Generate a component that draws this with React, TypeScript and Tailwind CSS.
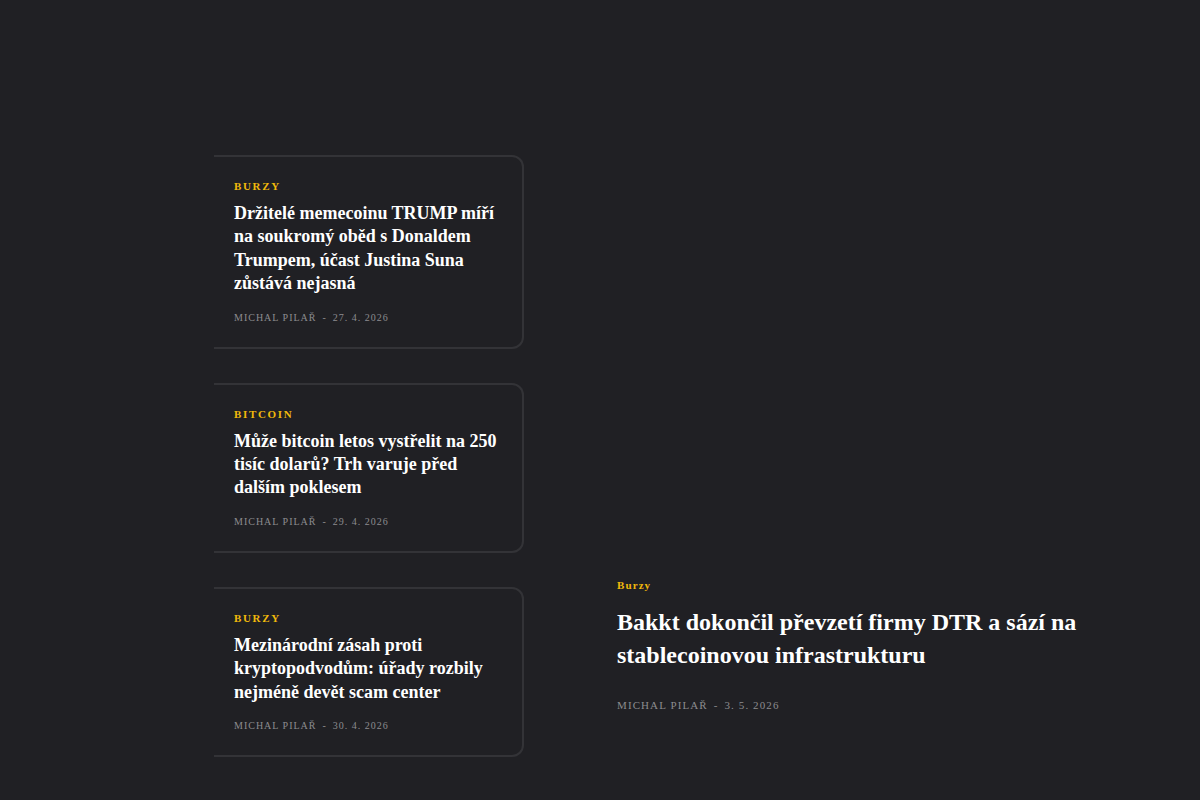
const SERIF = 'font-["Liberation_Serif","Times_New_Roman",serif]'

type Article = {
    category: string
    title: string
    author: string
    date: string
}

const SIDE_ARTICLES: Article[] = [
    {
        category: 'Burzy',
        title: 'Držitelé memecoinu TRUMP míří na soukromý oběd s Donaldem Trumpem, účast Justina Suna zůstává nejasná',
        author: 'Michal Pilař',
        date: '27. 4. 2026',
    },
    {
        category: 'Bitcoin',
        title: 'Může bitcoin letos vystřelit na 250 tisíc dolarů? Trh varuje před dalším poklesem',
        author: 'Michal Pilař',
        date: '29. 4. 2026',
    },
    {
        category: 'Burzy',
        title: 'Mezinárodní zásah proti kryptopodvodům: úřady rozbily nejméně devět scam center',
        author: 'Michal Pilař',
        date: '30. 4. 2026',
    },
]

const FEATURED: Article = {
    category: 'Burzy',
    title: 'Bakkt dokončil převzetí firmy DTR a sází na stablecoinovou infrastrukturu',
    author: 'Michal Pilař',
    date: '3. 5. 2026',
}

function SideCard({ article }: { article: Article }) {
    return (
        <article className="border-2 border-l-0 border-[#333337] rounded-r-xl pl-5 pr-6 pt-[22px] pb-[22px]">
            <p className="text-[11px] leading-[14px] font-bold uppercase tracking-[0.15em] text-[#f0b90b]">
                {article.category}
            </p>
            <h3 className="mt-[9px] text-[18px] leading-[23.4px] font-bold text-white">
                {article.title}
            </h3>
            <p className="mt-[15px] text-[10px] leading-[14px] uppercase tracking-[0.1em] text-[#8c8c8f]">
                {article.author}
                <span className="mx-1.5">-</span>
                {article.date}
            </p>
        </article>
    )
}

export default function App() {
    return (
        <div className={`min-h-[800px] bg-[#202024] ${SERIF}`}>
            <main className="flex pt-[155px] pl-[214px]">
                {/* Side list */}
                <div className="w-[310px] shrink-0 flex flex-col gap-[34px]">
                    {SIDE_ARTICLES.map(a => (
                        <SideCard key={a.title} article={a} />
                    ))}
                </div>

                {/* Featured */}
                <div className="ml-[93px] w-[480px] flex flex-col justify-end pb-[45px]">
                    <p className="text-[11px] leading-[14px] font-bold tracking-[0.1em] text-[#f0b90b]">
                        {FEATURED.category}
                    </p>
                    <h2 className="mt-[14px] text-[24px] leading-[33px] font-bold text-white">
                        {FEATURED.title}
                    </h2>
                    <p className="mt-[26px] text-[11px] leading-[14px] uppercase tracking-[0.1em] text-[#8c8c8f]">
                        {FEATURED.author}
                        <span className="mx-1.5">-</span>
                        {FEATURED.date}
                    </p>
                </div>
            </main>
        </div>
    )
}
